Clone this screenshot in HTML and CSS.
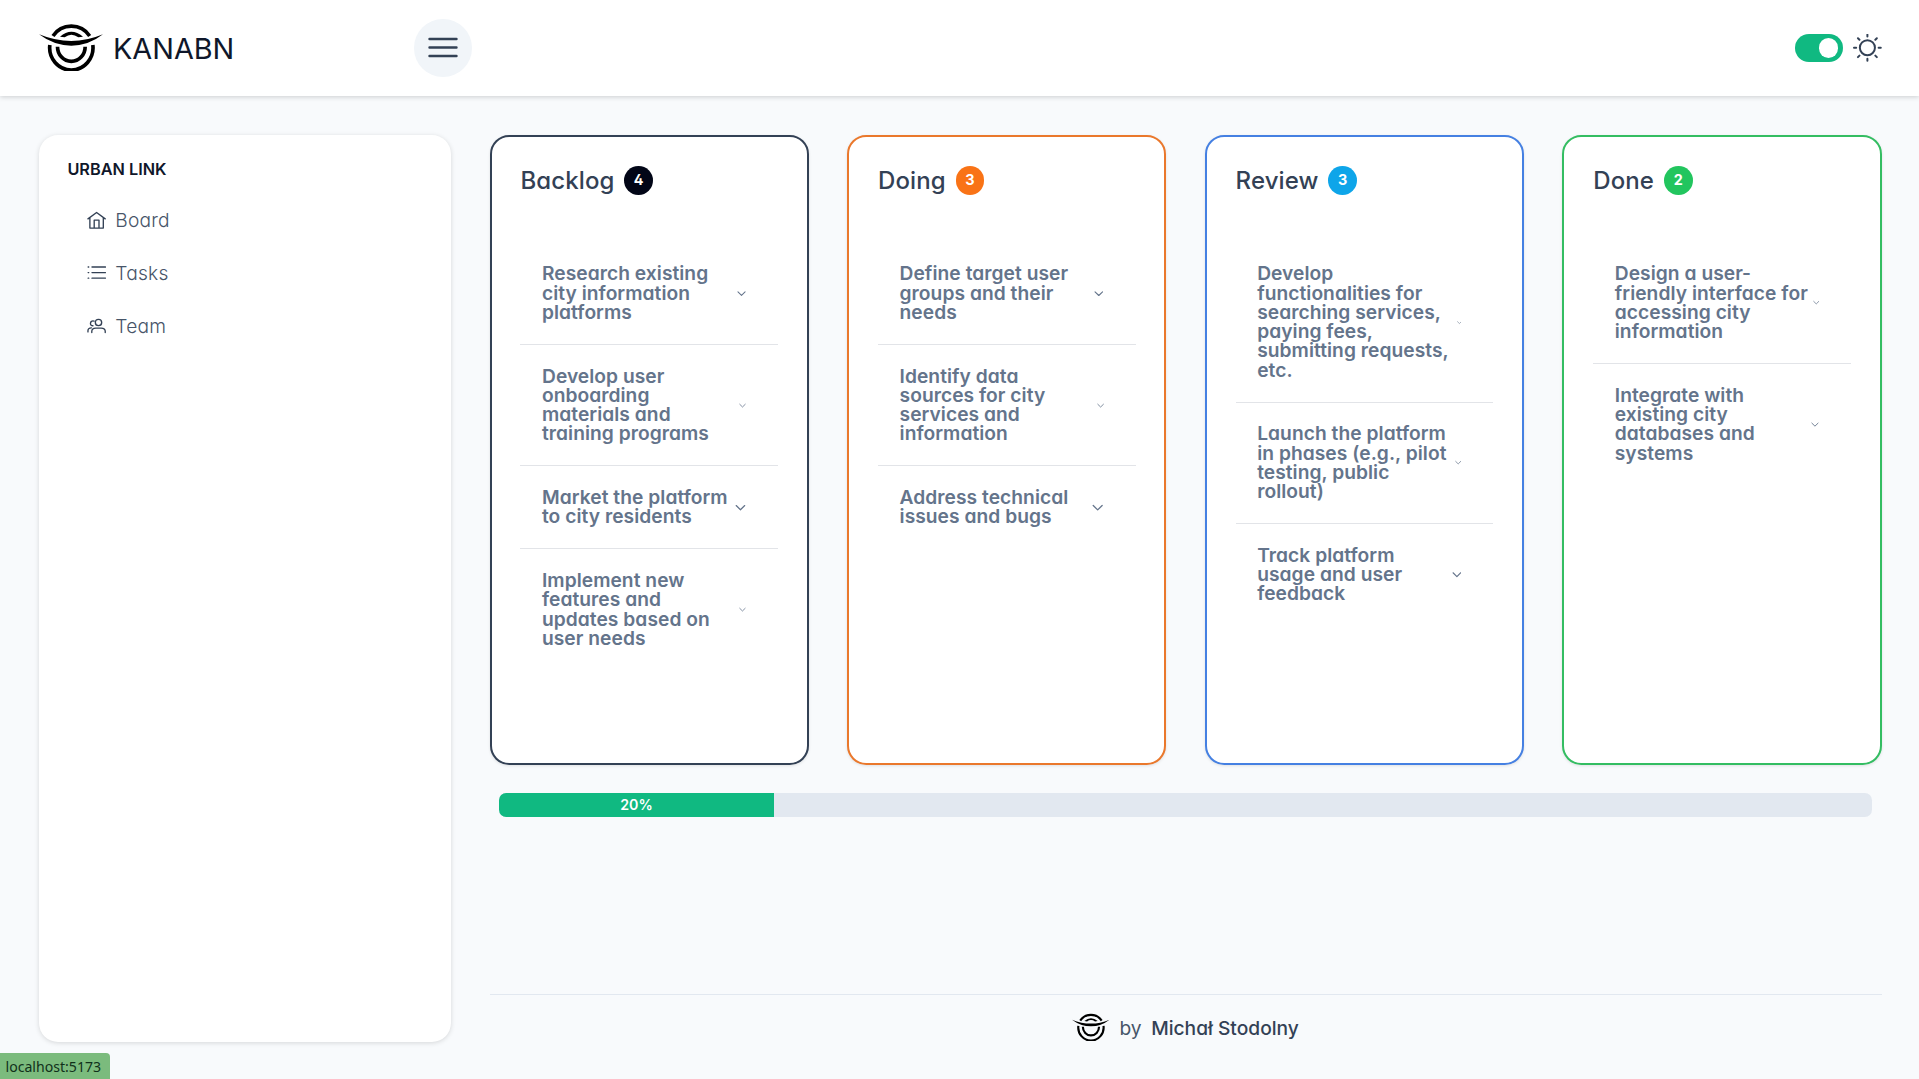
FILE: index.html
```html
<!DOCTYPE html>
<html lang="en">
<head>
<meta charset="utf-8">
<title>KANABN</title>
<link rel="stylesheet" href="styles.css">
</head>
<body>
<svg class="defs" aria-hidden="true">
  <symbol id="logo" viewBox="57 70 192 144">
    <path fill="none" stroke="#000" stroke-width="11" d="M99 109A66 66 0 0 1 209 109M89.500 136A65 67 0 1 0 218.500 136M112.500 141A41.500 44 0 0 0 195.500 141"/>
    <path d="M120 111Q154 82 189 111L175 113Q154 98 134 113Z"/>
    <path d="M57 104Q154 144 249 104Q206 138 154 138Q102 138 57 104Z"/>
  </symbol>
  <symbol id="chevron" viewBox="0 0 14 14">
    <path fill="none" stroke="currentColor" stroke-width="1.600" stroke-linecap="round" stroke-linejoin="round" d="M1.500 4.400L7 9.800L12.500 4.400"/>
  </symbol>
</svg>
<header class="topbar">
  <a class="brand"><svg class="brand-logo"><use href="#logo"/></svg><span>KANABN</span></a>
  <button class="menu" aria-label="Menu"><svg viewBox="0 0 30 30"><path d="M1.500 6h27M1.500 14.500h27M1.500 23h27"/></svg></button>
  <div class="theme">
    <span class="switch"><i></i></span>
    <svg class="sun" viewBox="0 0 29 29"><circle cx="14.500" cy="13.800" r="7.600"/><path d="M14.500 .6v2M14.500 25v2M1 13.800h2.200M25.800 13.800h2.200M5 4.300l1.500 1.500M22.500 21.800l1.500 1.500M5 23.300l1.500-1.500M22.500 5.800l1.500-1.500"/></svg>
  </div>
</header>
<div class="layout">
  <aside class="sidebar">
    <h2>URBAN LINK</h2>
    <nav>
      <a><svg viewBox="0 0 20 20"><path d="M1 8.200L10 1.500L19 8.200M3 7v10.800h14V7M7.500 17.500V9.500h5v8"/></svg>Board</a>
      <a><svg viewBox="0 0 20 20"><path d="M5.200 4.200h14M5.200 10h14M5.200 15.800h14M1.200 4.200h.6M1.200 10h.6M1.200 15.800h.6"/></svg>Tasks</a>
      <a><svg viewBox="0 0 20 20"><circle cx="12" cy="6.800" r="3.300"/><path d="M5 17.300v-1.300c0-2.300 2-3.400 4.200-3.400h5.600c2.300 0 4.200 1.200 4.200 3.400v1.300M7.400 5.400C5.200 4.600 3.600 6 3.600 7.800c0 1.500 1.100 2.500 2.600 2.400M1 16.600v-1.300c0-2 1.200-2.800 3.600-2.900"/></svg>Team</a>
    </nav>
  </aside>
  <main class="content">
    <div class="board">
      <section class="column backlog">
        <h3>Backlog <b>4</b></h3>
        <ul>
          <li><span>Research existing city information platforms</span><svg><use href="#chevron"/></svg></li>
          <li><span>Develop user onboarding materials and training programs</span><svg><use href="#chevron"/></svg></li>
          <li><span>Market the platform to city residents</span><svg><use href="#chevron"/></svg></li>
          <li><span>Implement new features and updates based on user needs</span><svg><use href="#chevron"/></svg></li>
        </ul>
      </section>
      <section class="column doing">
        <h3>Doing <b>3</b></h3>
        <ul>
          <li><span>Define target user groups and their needs</span><svg><use href="#chevron"/></svg></li>
          <li><span class="narrow">Identify data sources for city services and information</span><svg><use href="#chevron"/></svg></li>
          <li><span>Address technical issues and bugs</span><svg><use href="#chevron"/></svg></li>
        </ul>
      </section>
      <section class="column review">
        <h3>Review <b>3</b></h3>
        <ul>
          <li><span>Develop functionalities for searching services, paying fees, submitting requests, etc.</span><svg><use href="#chevron"/></svg></li>
          <li><span>Launch the platform in phases (e.g., pilot testing, public rollout)</span><svg><use href="#chevron"/></svg></li>
          <li><span>Track platform usage and user feedback</span><svg><use href="#chevron"/></svg></li>
        </ul>
      </section>
      <section class="column done">
        <h3>Done <b>2</b></h3>
        <ul>
          <li><span>Design a user-friendly interface for accessing city information</span><svg><use href="#chevron"/></svg></li>
          <li><span>Integrate with existing city databases and systems</span><svg><use href="#chevron"/></svg></li>
        </ul>
      </section>
    </div>
    <div class="progress"><div class="progress-value" style="width:20%">20%</div></div>
    <footer class="footer"><svg><use href="#logo"/></svg><span>by</span><strong>Michał Stodolny</strong></footer>
  </main>
</div>
<div class="status">localhost:5173</div>
</body>
</html>
```
FILE: styles.css
```css
* { box-sizing: border-box; }
body {
  margin: 0;
  height: 1079px;
  overflow: hidden;
  background: #f8fafc;
  color: #334155;
  font-family: Inter, "Liberation Sans", sans-serif;
  font-feature-settings: "cv02", "cv03", "cv04", "cv11";
  font-size: 19.2px;
}
h2, h3, ul { margin: 0; padding: 0; }
.defs { display: none; }

.topbar {
  display: flex;
  align-items: center;
  height: 96px;
  padding: 0 37.400px 0 39px;
  background: #fff;
  box-shadow: 0 1px 5px rgba(0, 0, 0, .18);
}
.brand {
  display: flex;
  align-items: center;
  gap: 10px;
  width: 375px;
  color: #0f172a;
  font-size: 28.8px;
}
.brand-logo { width: 64px; height: 48px; margin-top: -3px; }
.menu {
  display: grid;
  place-items: center;
  width: 57.6px;
  height: 57.6px;
  padding: 0;
  border: 0;
  border-radius: 50%;
  background: #f1f5f9;
}
.menu svg { width: 30px; height: 30px; fill: none; stroke: #334155; stroke-width: 2.4; stroke-linecap: round; }
.theme { display: flex; align-items: center; gap: 9.600px; margin-left: auto; }
.switch {
  display: flex;
  align-items: center;
  justify-content: flex-end;
  width: 48px;
  height: 28.8px;
  padding-right: 4.800px;
  border-radius: 15px;
  background: #10b981;
}
.switch i { width: 19.2px; height: 19.2px; border-radius: 50%; background: #fff; }
.sun { width: 28.8px; height: 28.8px; fill: none; stroke: #334155; stroke-width: 2; stroke-linecap: round; }

.layout {
  display: flex;
  gap: 38.4px;
  height: 983px;
  padding: 39px 37.400px 37px 38.600px;
}
.sidebar {
  flex: 0 0 412.6px;
  padding: 28.2px 28.8px;
  border-radius: 19.2px;
  background: #fff;
  box-shadow: 0 1px 5px rgba(0, 0, 0, .14);
}
.sidebar h2 { color: #0f172a; font-size: 16.3px; font-weight: 600; line-height: 12px; }
.sidebar nav { display: flex; flex-direction: column; padding: 19px 0 0 19.2px; }
.sidebar a {
  display: flex;
  align-items: center;
  gap: 9.600px;
  height: 52.6px;
  color: #475569;
  font-weight: 300;
  letter-spacing: .2px;
}
.sidebar svg { width: 19.2px; height: 19.2px; fill: none; stroke: #334155; stroke-width: 1.400; stroke-linecap: round; stroke-linejoin: round; }

.content { flex: 1; display: flex; flex-direction: column; min-width: 0; }
.board { display: grid; grid-template-columns: repeat(4, 1fr); gap: 38.4px; height: 630px; }
.column { padding: 28.8px; border: 2px solid; border-radius: 19.2px; background: #fff; box-shadow: 0 1px 3px rgba(0, 0, 0, .1); }
.column h3 {
  display: flex;
  align-items: center;
  gap: 9.800px;
  height: 28.8px;
  margin-bottom: 48.1px;
  color: #334155;
  font-size: 24px;
  font-weight: 500;
  letter-spacing: .12px;
}
.column b {
  width: 28.8px;
  height: 28.8px;
  border-radius: 50%;
  color: #fff;
  font-size: 14.4px;
  font-weight: 700;
  line-height: 28.8px;
  text-align: center;
}
.backlog { border-color: #334155; }
.doing { border-color: #ea782c; }
.review { border-color: #4580e2; }
.done { border-color: #34bd62; }
.backlog b { background: #020617; }
.doing b { background: #f97316; }
.review b { background: #0ea5e9; }
.done b { background: #22c55e; }
.column li {
  display: flex;
  align-items: center;
  justify-content: space-between;
  padding: 21.8px 21.6px;
  border-bottom: 1px solid #e2e4e8;
  color: #64748b;
  font-weight: 600;
  line-height: 19.2px;
  letter-spacing: .05px;
}
.column li:last-child { border-bottom: 0; }
.column li svg { width: 19.2px; height: 19.2px; min-width: 0; margin-right: 10.200px; }
.column .narrow { padding-right: 6px; }

.progress { height: 24px; margin: 28.2px 9.600px 0; border-radius: 7.200px; background: #e2e8f0; overflow: hidden; }
.progress-value {
  height: 24px;
  background: #10b981;
  color: #fff;
  font-size: 14.2px;
  font-weight: 600;
  line-height: 24px;
  text-align: center;
}
.footer {
  display: flex;
  align-items: center;
  justify-content: center;
  gap: 9.600px;
  height: 48px;
  margin-top: auto;
  padding-top: 19px;
  border-top: 1px solid #e2e8f0;
  color: #475569;
}
.footer svg { width: 37.5px; height: 28.1px; margin-top: -2px; }
.footer strong { color: #334155; font-weight: 500; }

.status {
  position: absolute;
  left: 0;
  bottom: 0;
  width: 110px;
  height: 26.500px;
  padding-left: 5.500px;
  border-radius: 0 4px 0 0;
  background: #7bbb7d;
  color: #10301a;
  font: 14.1px/27px "Noto Sans", "Open Sans", sans-serif;
}
```
